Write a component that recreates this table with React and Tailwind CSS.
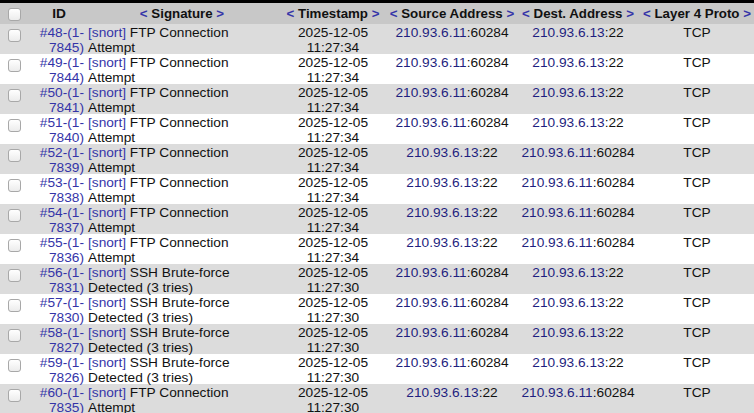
import React from "react";

const rows = [
  [48, 7845, "ftp", "11:27:34", "a"],
  [49, 7844, "ftp", "11:27:34", "a"],
  [50, 7841, "ftp", "11:27:34", "a"],
  [51, 7840, "ftp", "11:27:34", "a"],
  [52, 7839, "ftp", "11:27:34", "b"],
  [53, 7838, "ftp", "11:27:34", "b"],
  [54, 7837, "ftp", "11:27:34", "b"],
  [55, 7836, "ftp", "11:27:34", "b"],
  [56, 7831, "ssh", "11:27:30", "a"],
  [57, 7830, "ssh", "11:27:30", "a"],
  [58, 7827, "ssh", "11:27:30", "a"],
  [59, 7826, "ssh", "11:27:30", "a"],
  [60, 7835, "ftp", "11:27:30", "b"],
];

const cols = "grid grid-cols-[30px_56px_192px_110px_128px_124px_114px]";

function Box() {
  return (
    <div className="ml-[8px] mt-[5px] h-[13px] w-[13px] rounded-[3px] border border-[#a8a8a8] bg-gradient-to-b from-white to-[#ececec]" />
  );
}

function Ip({ host, port }) {
  return (
    <span>
      <span className="text-[#1f1f80]">{host}</span>:{port}
    </span>
  );
}

function Head({ children }) {
  return (
    <div className="text-center font-bold whitespace-nowrap text-[13.3px]">
      <span className="text-[#3434a8]">&lt;</span> {children}{" "}
      <span className="text-[#3434a8]">&gt;</span>
    </div>
  );
}

export default function App() {
  return (
    <div
      className="w-[754px] h-[413px] overflow-hidden bg-white text-[13.7px] leading-[15px] text-[#111]"
      style={{ fontFamily: '"Liberation Sans", Arial, sans-serif' }}
    >
      <div className="h-[3px] bg-black" />
      <div className={`${cols} h-[21px] bg-[#c8c8c8] items-center`}>
        <div className="-mt-[4px]">
          <Box />
        </div>
        <div className="text-center font-bold pl-[2px]">ID</div>
        <Head>Signature</Head>
        <Head>Timestamp</Head>
        <Head>Source Address</Head>
        <Head>Dest. Address</Head>
        <Head>Layer 4 Proto</Head>
      </div>
      {rows.map(([n, id, sig, time, dir], i) => {
        const a = <Ip host="210.93.6.11" port="60284" />;
        const b = <Ip host="210.93.6.13" port="22" />;
        return (
          <div
            key={n}
            className={`${cols} h-[30px] pt-[1px] ${i % 2 === 0 ? "bg-[#dcdcdc]" : "bg-white"}`}
          >
            <div className="-mt-[1px]">
              <Box />
            </div>
            <div className="text-right pr-[2px] text-[#3434a8]">
              #{n}-(1-
              <br />
              {id})
            </div>
            <div className="pl-[2px]">
              <span className="text-[#3434a8]">[snort]</span>{" "}
              {sig === "ftp" ? "FTP Connection" : "SSH Brute-force"}
              <br />
              {sig === "ftp" ? "Attempt" : "Detected (3 tries)"}
            </div>
            <div className="text-center">
              2025-12-05
              <br />
              {time}
            </div>
            <div className="text-center">{dir === "a" ? a : b}</div>
            <div className="text-center">{dir === "a" ? b : a}</div>
            <div className="text-center">TCP</div>
          </div>
        );
      })}
    </div>
  );
}
